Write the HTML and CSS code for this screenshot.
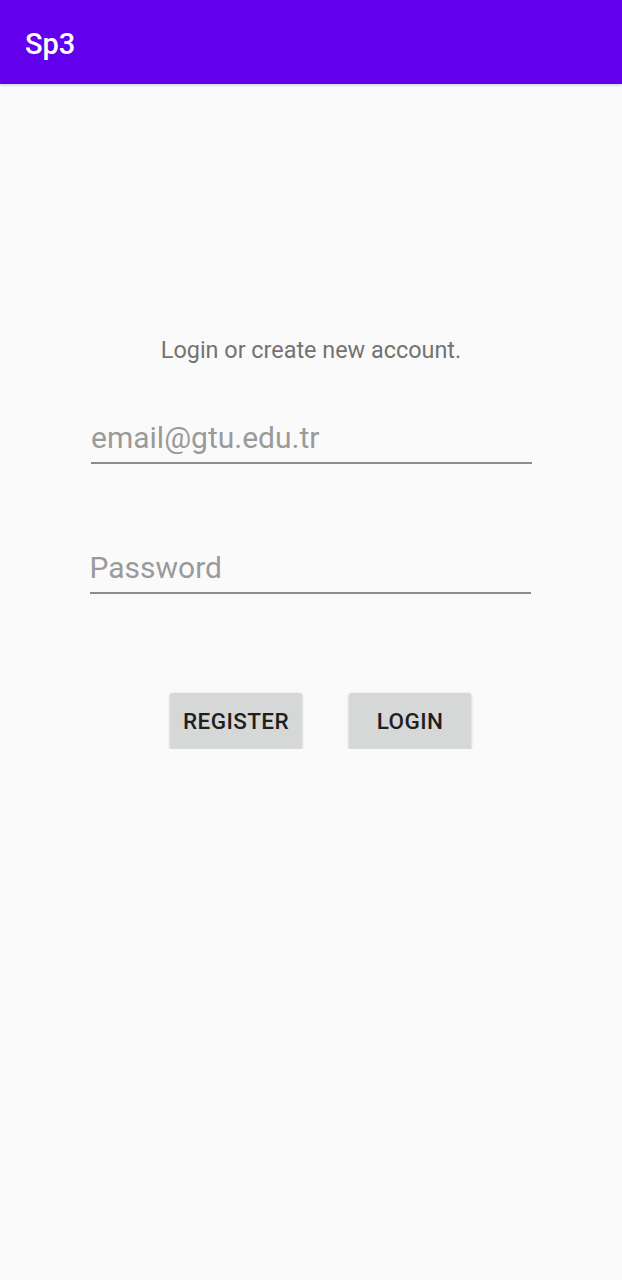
FILE: index.html
```html
<!DOCTYPE html>
<html>
<head>
<meta charset="utf-8">
<link rel="stylesheet" href="styles.css">
</head>
<body>
<header class="appbar"><span class="title">Sp3</span></header>
<main class="content">
  <p class="subtitle">Login or create new account.</p>
  <div class="field field-email"><span class="hint">email@gtu.edu.tr</span></div>
  <div class="field field-pass"><span class="hint">Password</span></div>
  <div class="actions">
    <button class="btn btn-register">REGISTER</button>
    <button class="btn btn-login">LOGIN</button>
  </div>
</main>
</body>
</html>
```
FILE: styles.css
```css
html, body {
  margin: 0;
  padding: 0;
  background: #fafafa;
  font-family: Roboto, "Noto Sans", sans-serif;
}
.appbar {
  height: 84px;
  background: #6200ee;
  display: flex;
  align-items: center;
  padding-left: 25px;
  box-shadow: 0 1px 3px rgba(0,0,0,0.2);
}
.title {
  color: #ffffff;
  font-size: 29px;
  font-weight: 500;
  margin-top: 3px;
}
.content {
  display: flex;
  flex-direction: column;
  padding-top: 253px;
}
.subtitle {
  margin: 0;
  text-align: center;
  font-size: 23.4px;
  line-height: 27px;
  color: #737373;
}
.field {
  align-self: center;
  width: 441px;
  border-bottom: 2px solid #8c8c8c;
  font-size: 30px;
  line-height: 36px;
  padding-bottom: 6px;
  color: #9a9a9a;
}
.field-email {
  margin-top: 56px;
  margin-left: 1px;
}
.field-pass {
  margin-top: 86px;
  margin-left: -2px;
}
.actions {
  display: flex;
  gap: 47px;
  padding-left: 170px;
  margin-top: 99px;
}
.btn {
  height: 56px;
  min-width: 122px;
  padding: 0 12px;
  border: none;
  border-radius: 2px;
  background: #d6d7d7;
  color: #1f1f1f;
  font-family: Roboto, "Noto Sans", sans-serif;
  font-size: 22.5px;
  font-weight: 500;
  letter-spacing: 0.4px;
  box-shadow: 0 1px 3px rgba(0,0,0,0.25);
}
.btn-register {
  width: 132px;
}
```
